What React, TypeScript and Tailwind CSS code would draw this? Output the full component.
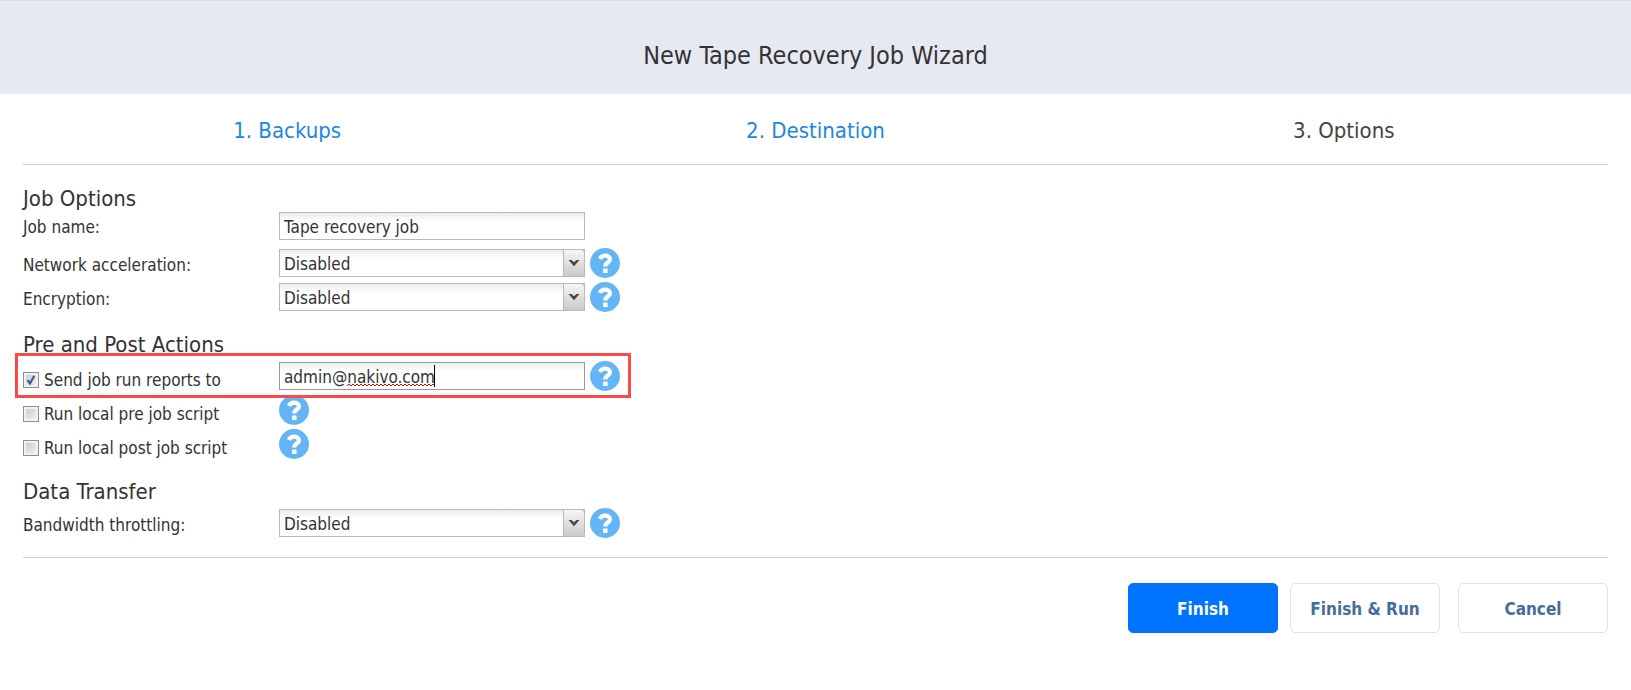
import React, { useId, useState } from "react";

function HelpButton({ topic }: { topic: string }) {
  return (
    <button type="button" aria-label={`Help: ${topic}`} className="size-[30px] shrink-0 cursor-pointer">
      <svg viewBox="0 0 30 30" className="block size-full" aria-hidden="true">
        <circle cx="15" cy="15" r="15" fill="#64b5f6" />
        <path d="M9.800 10.900C10.800 8.700 12.500 7.600 15 7.600C18 7.600 20 9 20 11.300C20 14.800 15.200 14.400 15.200 18.600" fill="none" stroke="#fff" strokeWidth="4.200" />
        <rect x="13" y="20.400" width="4.600" height="4.600" rx=".5" fill="#fff" />
      </svg>
    </button>
  );
}

const fieldClass =
  "w-full rounded-none border bg-white bg-linear-to-b from-[#e9edef] to-white to-35% px-1 pt-px text-[17px] leading-5 text-[#333] outline-none";

function Row({ children }: { children: React.ReactNode }) {
  return <div className="relative flex h-[34px] items-center">{children}</div>;
}

function SelectRow({ label }: { label: string }) {
  const id = useId();
  return (
    <Row>
      <label htmlFor={id} className="w-64 shrink-0 pt-1 leading-5">
        {label}
      </label>
      <div className="relative mr-[5px] w-[306px]">
        <select id={id} defaultValue="Disabled" className={`${fieldClass} block h-7 appearance-none border-[#b5b8c8] pr-6`}>
          <option>Disabled</option>
          <option>Enabled</option>
        </select>
        <span className="pointer-events-none absolute inset-y-0 right-0 flex w-[22px] justify-center rounded-tr-sm border border-[#b5b8c8] bg-linear-to-b from-[#f6f6f6] to-[#cacaca] pt-[9px]">
          <svg viewBox="0 0 12 8" className="h-2 w-3" aria-hidden="true">
            <path d="M.5 1H3.500L6 3.200L8.500 1H11.500L6 7.200Z" fill="#484848" />
          </svg>
        </span>
      </div>
      <HelpButton topic={label} />
    </Row>
  );
}

function CheckLabel({ label, checked: initial = false }: { label: string; checked?: boolean }) {
  const [checked, setChecked] = useState(initial);
  return (
    <label className="flex w-64 shrink-0 items-center gap-[5px] pt-2 leading-5">
      <span className="relative size-4 shrink-0">
        <input
          type="checkbox"
          checked={checked}
          onChange={(e) => setChecked(e.target.checked)}
          className="block size-4 appearance-none border border-[#8e8f8f] bg-linear-to-br from-[#c3c7cf] to-[#f6f6f6] shadow-[inset_0_0_0_2px_#f1f1f1]"
        />
        {checked && (
          <svg viewBox="0 0 16 16" className="pointer-events-none absolute inset-0 size-4" aria-hidden="true">
            <path d="M4.700 8.200L7 11.500L11.300 3.800" fill="none" stroke="#425a9c" strokeWidth="2.200" />
          </svg>
        )}
      </span>
      {label}
    </label>
  );
}

function Heading({ children }: { children: React.ReactNode }) {
  return <h2 className="mb-1 text-[22px] leading-5">{children}</h2>;
}

const buttonClass = "h-[50px] w-[150px] cursor-pointer rounded-[5px] border pt-[3px] text-[17px] font-bold";

export default function App() {
  return (
    <div className="min-h-screen bg-white font-['DejaVu_Sans_Condensed','Noto_Sans',sans-serif] text-[17px] text-[#333]">
      <header className="flex h-[94px] items-center justify-center border-t border-[#d8dce0] bg-[#e6e9f1] pt-4">
        <h1 className="text-[25px] leading-8">New Tape Recovery Job Wizard</h1>
      </header>
      <main className="px-[23px]">
        <nav className="grid h-[71px] grid-cols-3 items-center border-b border-[#ccc] pt-[2px] text-center text-[22px] text-[#1b87e5]">
          <a href="#backups">1. Backups</a>
          <a href="#destination">2. Destination</a>
          <a href="#options" aria-current="step" className="text-[#444]">
            3. Options
          </a>
        </nav>
        <form onSubmit={(e) => e.preventDefault()}>
          <section className="pt-6">
            <Heading>Job Options</Heading>
            <div className="mb-[7px] flex h-[26px] items-center">
              <label htmlFor="job-name" className="w-64 shrink-0 pt-px leading-5">
                Job name:
              </label>
              <div className="w-[306px]">
                <input id="job-name" defaultValue="Tape recovery job" className={`${fieldClass} block h-7 border-[#b5b8c8]`} />
              </div>
            </div>
            <SelectRow label="Network acceleration:" />
            <SelectRow label="Encryption:" />
          </section>
          <section className="pt-[21px]">
            <Heading>Pre and Post Actions</Heading>
            <Row>
              <CheckLabel label="Send job run reports to" checked />
              <div className="relative mr-[5px] w-[306px]">
                <input
                  type="text"
                  aria-label="Report recipient"
                  defaultValue="admin@nakivo.com"
                  className={`${fieldClass} block h-7 border-[#999]`}
                />
                <svg viewBox="0 0 88 4" className="pointer-events-none absolute bottom-[3px] left-[68px] h-1 w-[88px]" aria-hidden="true">
                  <path
                    d="M0 3L2 1L4 3L6 1L8 3L10 1L12 3L14 1L16 3L18 1L20 3L22 1L24 3L26 1L28 3L30 1L32 3L34 1L36 3L38 1L40 3L42 1L44 3L46 1L48 3L50 1L52 3L54 1L56 3L58 1L60 3L62 1L64 3L66 1L68 3L70 1L72 3L74 1L76 3L78 1L80 3L82 1L84 3L86 1L88 3"
                    fill="none"
                    stroke="#f00"
                  />
                </svg>
                <span className="pointer-events-none absolute top-[3px] left-[155px] h-[22px] w-px bg-black" />
              </div>
              <HelpButton topic="Job run reports" />
              <span className="pointer-events-none absolute -top-[6px] -bottom-[5px] -left-2 z-10 w-[616px] border-3 border-[#fc4848]" />
            </Row>
            <Row>
              <CheckLabel label="Run local pre job script" />
              <HelpButton topic="Pre job script" />
            </Row>
            <Row>
              <CheckLabel label="Run local post job script" />
              <HelpButton topic="Post job script" />
            </Row>
          </section>
          <section className="pt-[21px]">
            <Heading>Data Transfer</Heading>
            <SelectRow label="Bandwidth throttling:" />
          </section>
          <footer className="mt-[17px] flex justify-end border-t border-[#ccc] pt-[25px]">
            <button type="submit" className={`${buttonClass} border-[#0073ff] bg-[#0073ff] text-white`}>
              Finish
            </button>
            <button type="button" className={`${buttonClass} ml-3 border-[#dbe2ec] bg-white text-[#456d9c]`}>
              Finish &amp; Run
            </button>
            <button type="button" className={`${buttonClass} ml-[18px] border-[#dbe2ec] bg-white text-[#456d9c]`}>
              Cancel
            </button>
          </footer>
        </form>
      </main>
    </div>
  );
}
